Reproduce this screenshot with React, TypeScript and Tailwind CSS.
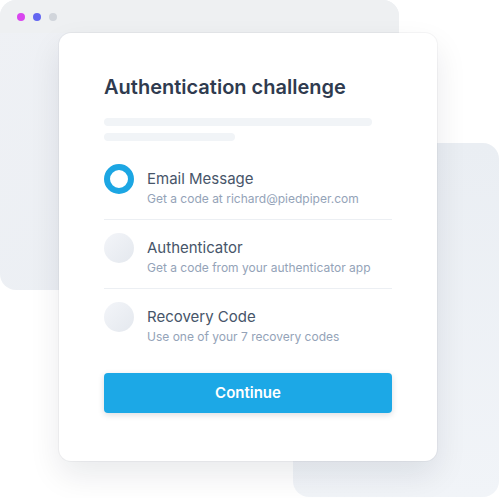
const options = [
  { title: 'Email Message', desc: 'Get a code at richard@piedpiper.com', selected: true },
  { title: 'Authenticator', desc: 'Get a code from your authenticator app', selected: false },
  { title: 'Recovery Code', desc: 'Use one of your 7 recovery codes', selected: false },
]

function Radio({ selected }: { selected: boolean }) {
  if (selected) {
    return <div className="w-[30px] h-[30px] rounded-full border-[6px] border-[#1ca6e3] bg-white shrink-0" />
  }
  return <div className="w-[30px] h-[30px] rounded-full bg-linear-to-br from-[#f3f5f9] to-[#e4e8ee] shrink-0" />
}

export default function App() {
  return (
    <div
      className="relative w-[500px] h-[498px] overflow-hidden bg-white"
      style={{ fontFamily: 'Inter, "Noto Sans", sans-serif' }}
    >
      {/* back window */}
      <div className="absolute left-0 top-0 w-[399px] h-[290px] rounded-2xl overflow-hidden bg-linear-to-br from-[#eff1f5] to-[#eaeef3] flex flex-col">
        <div className="h-[33px] bg-[#eef0f2] flex items-center gap-2 pl-[17px]">
          <span className="w-2 h-2 rounded-full bg-[#d946ef]" />
          <span className="w-2 h-2 rounded-full bg-[#6366f1]" />
          <span className="w-2 h-2 rounded-full bg-[#d1d5db]" />
        </div>
      </div>

      {/* back panel right */}
      <div className="absolute left-[293px] top-[143px] w-[206px] h-[354px] rounded-2xl bg-linear-to-b from-[#eaeef3] to-[#f1f4f8]" />

      {/* card */}
      <div className="absolute left-[59px] top-[33px] w-[378px] h-[428px] rounded-xl bg-white shadow-[0_0_0_1px_rgba(15,23,42,0.04),0_14px_32px_rgba(15,23,42,0.09)] px-[45px] pt-[40px]">
        <h1 className="text-[20px] leading-[28px] font-semibold text-[#2f3b4f]">
          Authentication challenge
        </h1>

        <div className="mt-[17px] flex flex-col gap-[7px]">
          <div className="h-2 w-[268px] rounded-full bg-[#f1f4f7]" />
          <div className="h-2 w-[131px] rounded-full bg-[#f1f4f7]" />
        </div>

        <div className="mt-[23px] flex flex-col">
          {options.map((o, i) => (
            <div key={o.title}>
              <div className={'flex items-start gap-[13px] ' + (i < options.length - 1 ? 'pb-[12px] border-b border-[#eceff3]' : '')}>
                <Radio selected={o.selected} />
                <div className="pt-[5px]">
                  <p className="text-[15px] leading-[20px] text-[#475569]">{o.title}</p>
                  <p className="mt-[2px] text-[12px] leading-[16px] text-[#94a3b8]">{o.desc}</p>
                </div>
              </div>
              {i < options.length - 1 && <div className="h-[13px]" />}
            </div>
          ))}
        </div>

        <button className="mt-[28px] w-full h-[40px] rounded bg-[#1ca8e6] text-white text-[15px] font-semibold shadow-[0_2px_6px_rgba(15,23,42,0.15)]">
          Continue
        </button>
      </div>
    </div>
  )
}
